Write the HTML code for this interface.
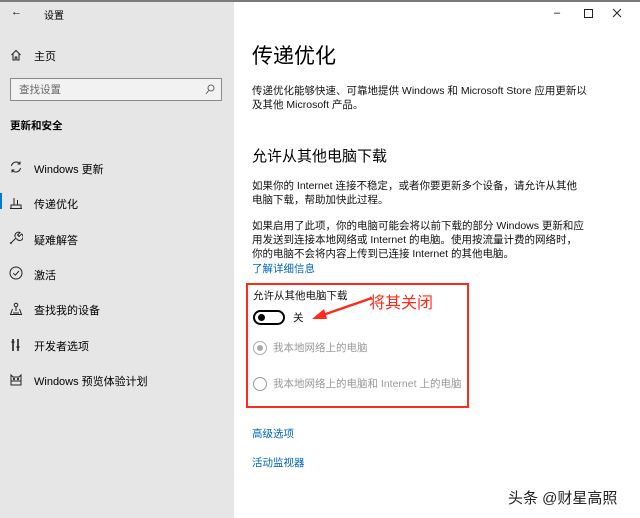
<!DOCTYPE html>
<html><head><meta charset="utf-8"><style>
*{margin:0;padding:0;box-sizing:border-box}
body{width:640px;height:518px;overflow:hidden;background:#fff;font-family:"Liberation Sans","Noto Sans CJK SC",sans-serif;color:#000;position:relative}
.a{position:absolute;white-space:nowrap}
#side{position:absolute;left:0;top:0;width:234px;height:518px;background:#e6e6e6}
#top{position:absolute;left:0;top:0;width:640px;height:2px;background:#7a7a7a}
.s{font-size:11px;color:#000}
.p{font-size:10.5px;line-height:14px;color:#111}
.l{font-size:10.5px;color:#0067c0}
svg.i{position:absolute;fill:none;stroke:#222;stroke-width:1}
</style></head><body>
<div id="side"></div>
<div id="top"></div>
<div class="a s" style="left:11px;top:6px">&#8592;</div>
<div class="a" style="left:44px;top:7px;font-size:10px">设置</div>
<svg class="i" style="left:10px;top:49px" width="12" height="12" viewBox="0 0 12 12"><path d="M1.5 6L6 1.5 10.5 6M3 5v6h2.2V8h1.6v3H9V5"/></svg>
<div class="a s" style="left:34px;top:48px">主页</div>
<div class="a" style="left:10px;top:78px;width:212px;height:23px;border:1.5px solid #8a8a8a;background:#f2f2f2"></div>
<div class="a" style="left:19px;top:82px;font-size:10.5px;color:#666">查找设置</div>
<svg class="i" style="left:205px;top:84px;stroke:#666" width="10" height="11"><circle cx="6" cy="4" r="3"/><path d="M4 6L1 10"/></svg>
<div class="a" style="left:10px;top:118px;font-size:10.5px;font-weight:bold">更新和安全</div>
<div class="a" style="left:0;top:193px;width:2px;height:16px;background:#0078d7"></div>
<svg class="i" style="left:9px;top:160px" width="14" height="14"><path d="M2.5 6A4.7 4.7 0 0 1 11 4M11.5 8A4.7 4.7 0 0 1 3 10M11 1.5V4H8.5M3 12.5V10H5.5"/></svg>
<div class="a s" style="left:34px;top:161px">Windows 更新</div>
<svg class="i" style="left:9px;top:196px" width="14" height="14"><path d="M1 12.5H13M2 12.5V9H12V12.5M5 9V2M8.5 9V4"/></svg>
<div class="a s" style="left:34px;top:196px">传递优化</div>
<svg class="i" style="left:9px;top:231px" width="14" height="14"><path d="M1.5 12.5L7 7M1 11.5l1.5 1.5M7.5 7.5A3.5 3.5 0 1 0 12.5 3L10 5.5 8.5 4 11 1.5A3.5 3.5 0 0 0 6.5 6.5"/></svg>
<div class="a s" style="left:34px;top:232px">疑难解答</div>
<svg class="i" style="left:9px;top:266px" width="14" height="14"><circle cx="7" cy="7" r="6"/><path d="M4.3 7.2l2 2L10 5"/></svg>
<div class="a s" style="left:34px;top:267px">激活</div>
<svg class="i" style="left:9px;top:302px" width="14" height="14"><circle cx="7" cy="3" r="1.8"/><path d="M7 5v4M3.5 7L1.5 12.5H12.5L10.5 7M4 11h6"/></svg>
<div class="a s" style="left:34px;top:302px">查找我的设备</div>
<svg class="i" style="left:10px;top:338px;stroke-width:1.6" width="12" height="14"><path d="M3 1v12M8 1v12M1.5 4h3M6.5 9h3"/></svg>
<div class="a s" style="left:34px;top:338px">开发者选项</div>
<svg class="i" style="left:9px;top:373px" width="14" height="14"><path d="M2 2l2 2h6l2-2v10H2zM2 8h10"/><circle cx="5" cy="6" r=".6"/><circle cx="9" cy="6" r=".6"/></svg>
<div class="a s" style="left:34px;top:373px">Windows 预览体验计划</div>

<div class="a" style="left:554px;top:7px;font-size:11px">&#8211;</div>
<div class="a" style="left:584px;top:9px;width:9px;height:9px;border:1px solid #222"></div>
<svg class="i" style="left:612px;top:8px" width="10" height="10"><path d="M1 1L9 9M9 1L1 9"/></svg>

<div class="a" style="left:252px;top:40px;font-size:21px">传递优化</div>
<div class="a p" style="left:252px;top:84px">传递优化能够快速、可靠地提供 Windows 和 Microsoft Store 应用更新以<br>及其他 Microsoft 产品。</div>
<div class="a" style="left:252px;top:145px;font-size:15px">允许从其他电脑下载</div>
<div class="a p" style="left:252px;top:179px">如果你的 Internet 连接不稳定，或者你要更新多个设备，请允许从其他<br>电脑下载，帮助加快此过程。</div>
<div class="a p" style="left:252px;top:219px">如果启用了此项，你的电脑可能会将以前下载的部分 Windows 更新和应<br>用发送到连接本地网络或 Internet 的电脑。使用按流量计费的网络时，<br>你的电脑不会将内容上传到已连接 Internet 的其他电脑。</div>
<div class="a l" style="left:252px;top:261px">了解详细信息</div>

<div class="a" style="left:246px;top:283px;width:223px;height:125px;border:2px solid #ff2a1a"></div>
<div class="a p" style="left:253px;top:289px">允许从其他电脑下载</div>
<div class="a" style="left:253px;top:310px;width:32px;height:15px;border:2px solid #000;border-radius:8px"></div>
<div class="a" style="left:258px;top:314px;width:7px;height:7px;background:#000;border-radius:50%"></div>
<div class="a p" style="left:293px;top:311px">关</div>
<svg class="a" style="left:306px;top:296px" width="70" height="28"><path d="M66 2L14 20" stroke="#ff2a1a" stroke-width="2.5"/><path d="M6 23L18 13 21 23Z" fill="#ff2a1a"/></svg>
<div class="a" style="left:369px;top:289px;font-size:16px;color:#ff2a1a">将其关闭</div>
<div class="a" style="left:253px;top:341px;width:14px;height:14px;border:1.5px solid #aaa;border-radius:50%"></div>
<div class="a" style="left:257px;top:345px;width:6px;height:6px;background:#aaa;border-radius:50%"></div>
<div class="a p" style="left:273px;top:341px;color:#999">我本地网络上的电脑</div>
<div class="a" style="left:253px;top:377px;width:14px;height:14px;border:1.5px solid #999;border-radius:50%"></div>
<div class="a p" style="left:273px;top:377px;color:#999">我本地网络上的电脑和 Internet 上的电脑</div>

<div class="a l" style="left:252px;top:426px">高级选项</div>
<div class="a l" style="left:252px;top:455px">活动监视器</div>
<div class="a" style="left:508px;top:487px;font-size:15px;color:#222">头条 @财星高照</div>
</body></html>
